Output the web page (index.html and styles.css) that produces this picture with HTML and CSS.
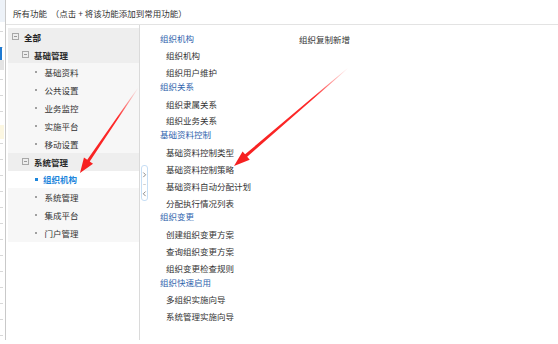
FILE: index.html
```html
<!DOCTYPE html>
<html lang="zh-CN">
<head>
<meta charset="utf-8">
<title>所有功能</title>
<link rel="stylesheet" href="styles.css">
</head>
<body>
<div class="app">
  <div class="edge"></div>
  <div class="main">
    <div class="header">所有功能&nbsp;&nbsp;（点击 + 将该功能添加到常用功能）</div>
    <div class="body">
      <div class="tree">
        <div class="row lv1"><span class="fold"></span>全部</div>
        <div class="row lv2"><span class="fold"></span>基础管理</div>
        <div class="row leaf"><span class="dot"></span>基础资料</div>
        <div class="row leaf"><span class="dot"></span>公共设置</div>
        <div class="row leaf"><span class="dot"></span>业务监控</div>
        <div class="row leaf"><span class="dot"></span>实施平台</div>
        <div class="row leaf"><span class="dot"></span>移动设置</div>
        <div class="row lv2"><span class="fold"></span>系统管理</div>
        <div class="row leaf active"><span class="dot"></span>组织机构</div>
        <div class="row leaf"><span class="dot"></span>系统管理</div>
        <div class="row leaf"><span class="dot"></span>集成平台</div>
        <div class="row leaf"><span class="dot"></span>门户管理</div>
      </div>
      <div class="splitter">
        <div class="handle">
          <svg width="5" height="34" viewBox="0 0 5 34">
            <path d="M1.3 6.5 L3.6 8.8 L1.3 11.1" fill="none" stroke="#8a8a8a" stroke-width="1"/>
            <path d="M1.2 18.5 H3.8" stroke="#d0d0d0" stroke-width="1"/>
            <path d="M3.6 25.5 L1.3 27.8 L3.6 30.1" fill="none" stroke="#8a8a8a" stroke-width="1"/>
          </svg>
        </div>
      </div>
      <div class="content">
        <div class="col">
          <div class="group">
            <div class="heading">组织机构</div>
            <div class="item">组织机构</div>
            <div class="item">组织用户维护</div>
          </div>
          <div class="group">
            <div class="heading">组织关系</div>
            <div class="item">组织隶属关系</div>
            <div class="item">组织业务关系</div>
          </div>
          <div class="group">
            <div class="heading">基础资料控制</div>
            <div class="item">基础资料控制类型</div>
            <div class="item">基础资料控制策略</div>
            <div class="item">基础资料自动分配计划</div>
            <div class="item">分配执行情况列表</div>
          </div>
          <div class="group">
            <div class="heading">组织变更</div>
            <div class="item">创建组织变更方案</div>
            <div class="item">查询组织变更方案</div>
            <div class="item">组织变更检查规则</div>
          </div>
          <div class="group">
            <div class="heading">组织快速启用</div>
            <div class="item">多组织实施向导</div>
            <div class="item">系统管理实施向导</div>
          </div>
        </div>
        <div class="col2">
          <div class="item">组织复制新增</div>
        </div>
      </div>
    </div>
  </div>
  <svg class="arrows" width="558" height="344" viewBox="0 0 558 344">
    <defs>
      <linearGradient id="g1" gradientUnits="userSpaceOnUse" x1="138" y1="88" x2="80" y2="173">
        <stop offset="0" stop-color="#ff2a2a" stop-opacity="0"/>
        <stop offset="0.35" stop-color="#ff2a2a" stop-opacity="1"/>
        <stop offset="1" stop-color="#f52020" stop-opacity="1"/>
      </linearGradient>
      <linearGradient id="g2" gradientUnits="userSpaceOnUse" x1="348" y1="68" x2="234" y2="166">
        <stop offset="0" stop-color="#ff2a2a" stop-opacity="0"/>
        <stop offset="0.3" stop-color="#ff2a2a" stop-opacity="1"/>
        <stop offset="1" stop-color="#f52020" stop-opacity="1"/>
      </linearGradient>
    </defs>
    <polygon fill="url(#g1)" points="138.25,88.17 89.73,161.49 93.02,163.75 80,173 83.96,157.53 87.25,159.79 137.75,87.83"/>
    <polygon fill="url(#g2)" points="348.2,68.23 247.18,156.78 249.73,159.74 234,166 242.55,151.4 245.1,154.36 347.8,67.77"/>
  </svg>
</div>
</body>
</html>
```
FILE: styles.css
```css
html, body {
  margin: 0;
  padding: 0;
  background: #ffffff;
}

body {
  font-family: "Noto Sans CJK SC", "Microsoft YaHei", "Noto Sans", sans-serif;
  font-size: 8.5px;
  color: #333333;
}

.app {
  position: relative;
  display: flex;
  width: 558px;
  height: 340px;
}

.edge {
  width: 5px;
  flex: none;
  border-right: 1px solid #c9c9c9;
  background:
    linear-gradient(#1e7ad2, #1e7ad2) 0 47px / 2px 13px no-repeat,
    linear-gradient(#e4e4e4, #e4e4e4) 0 60px / 4px 10px no-repeat,
    linear-gradient(#fcf7e2, #fcf7e2) 0 125px / 4px 14px no-repeat,
    linear-gradient(#edf2f8, #edf2f8) 0 0 / 5px 22px no-repeat,
    repeating-linear-gradient(to bottom, transparent 0 15px, #d8d8d8 15px 16px) 0 0 / 3px 100% no-repeat;
}

.main {
  flex: 1;
  display: flex;
  flex-direction: column;
  min-width: 0;
}

.header {
  height: 24px;
  line-height: 26px;
  padding-left: 7px;
  border-bottom: 1px solid #e3e3e3;
  color: #333;
  white-space: nowrap;
}

.body {
  flex: 1;
  display: flex;
  padding-left: 2px;
  min-height: 0;
}

.tree {
  width: 131px;
  flex: none;
  border-right: 1px solid #dadada;
  padding-top: 2.8px;
}

.row {
  height: 17.85px;
  display: flex;
  align-items: center;
  white-space: nowrap;
}

.lv1 {
  background: #eeeeee;
  padding-left: 4px;
  font-weight: bold;
  color: #222;
}

.lv2 {
  background: #eeeeee;
  padding-left: 14px;
  font-weight: bold;
  color: #2a2a2a;
}

.fold {
  width: 5px;
  height: 5px;
  border: 1px solid #a8a8a8;
  margin-right: 5px;
  position: relative;
  flex: none;
}

.fold::after {
  content: "";
  position: absolute;
  left: 1px;
  right: 1px;
  top: 2px;
  height: 1px;
  background: #9a9a9a;
}

.leaf {
  background: #f7f7f7;
  padding-left: 27px;
  color: #333;
}

.dot {
  width: 2px;
  height: 2px;
  background: #a0a0a0;
  margin-right: 7.5px;
  flex: none;
}

.leaf.active {
  background: #ffffff;
  color: #1d86dc;
  font-weight: bold;
}

.leaf.active .dot {
  background: #1d86dc;
  width: 2.5px;
  height: 2.5px;
  margin-right: 5.5px;
}

.splitter {
  width: 10px;
  flex: none;
  display: flex;
  align-items: center;
}

.handle {
  margin-left: 1px;
  width: 5px;
  height: 34px;
  border: 1px solid #c6def5;
  border-radius: 3px;
  background: #ffffff;
  display: flex;
}

.content {
  flex: 1;
  display: flex;
  padding: 5.5px 0 0 10px;
}

.col {
  width: 139px;
  flex: none;
  padding-top: 2.2px;
}

.col2 {
  padding-left: 0;
}

.heading {
  line-height: 10px;
  padding-bottom: 4.5px;
  color: #2f64ad;
  white-space: nowrap;
}

.item {
  line-height: 16.9px;
  padding-left: 6px;
  color: #333;
  white-space: nowrap;
}

.col2 .item {
  padding-left: 0;
}

.arrows {
  position: absolute;
  left: 0;
  top: 0;
  pointer-events: none;
}
```
